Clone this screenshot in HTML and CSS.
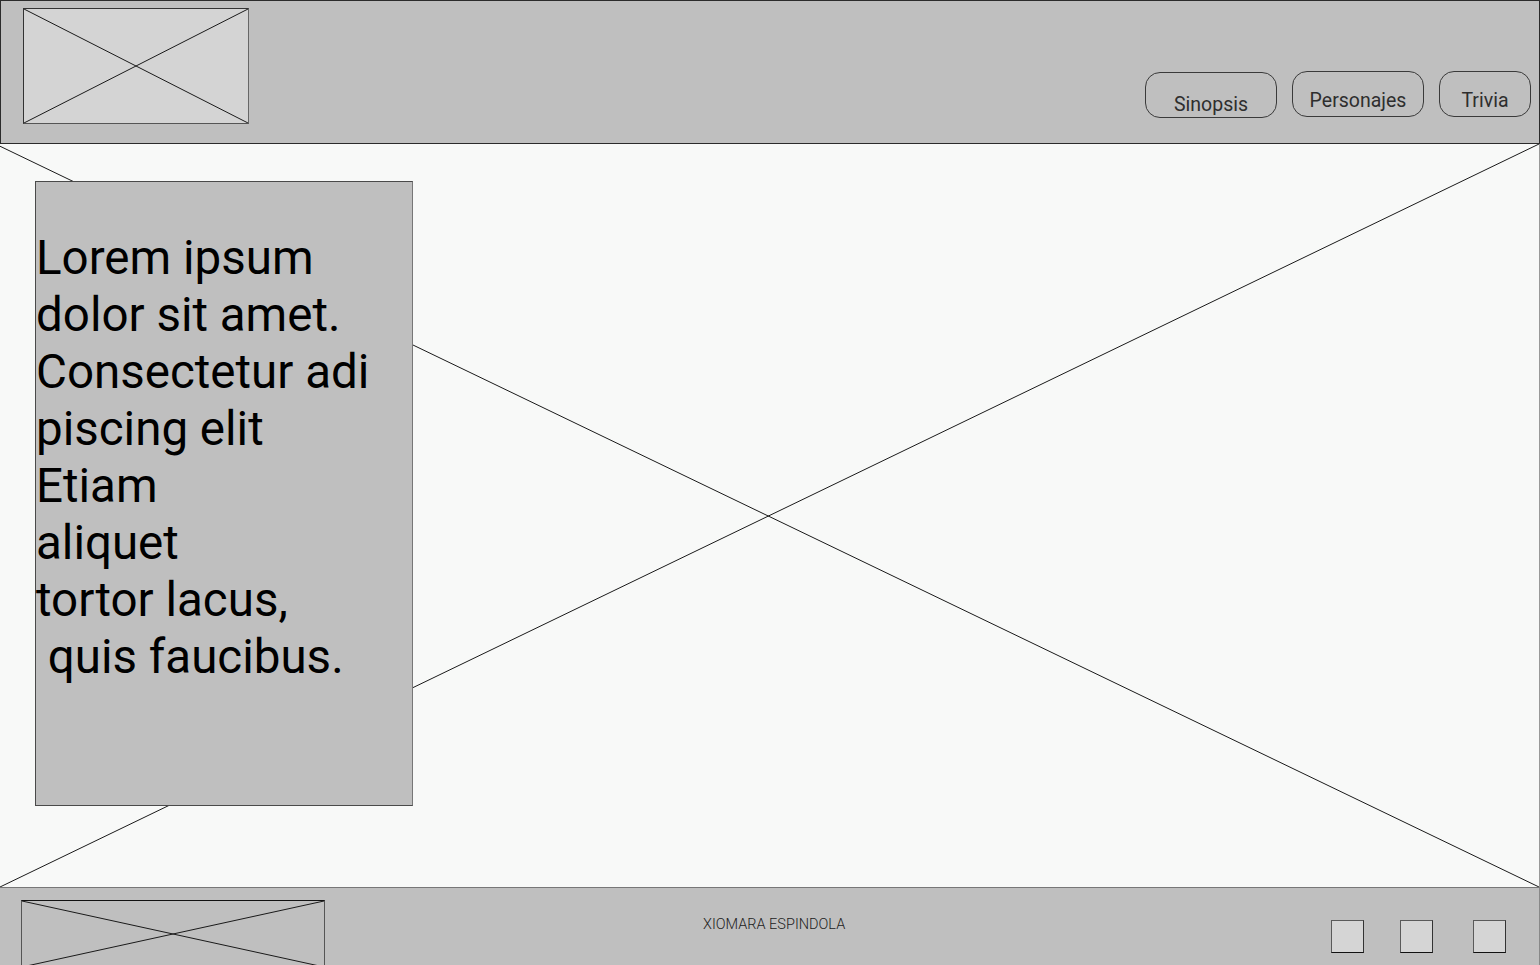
FILE: index.html
```html
<!DOCTYPE html>
<html>
	<head>
		<meta charset="utf-8">
		<title>Wireframe</title>
		<link rel="stylesheet" href="styles.css">
	</head>
	<body>
		<div class="page">
			<!-- cabecera -->
			<div class="header">
				<div class="logo">
					<svg class="cross" viewBox="0 0 100 100" preserveAspectRatio="none">
						<line x1="0" y1="0" x2="100" y2="100" vector-effect="non-scaling-stroke"/>
						<line x1="100" y1="0" x2="0" y2="100" vector-effect="non-scaling-stroke"/>
					</svg>
				</div>
				<div class="nav">
					<div class="navBtn btnLow">Sinopsis</div>
					<div class="navBtn">Personajes</div>
					<div class="navBtn btnSmall">Trivia</div>
				</div>
			</div>
			<!-- contenido -->
			<div class="hero">
				<svg class="cross" viewBox="0 0 100 100" preserveAspectRatio="none">
					<line x1="0" y1="0.3" x2="100" y2="100" vector-effect="non-scaling-stroke"/>
					<line x1="100" y1="0" x2="0" y2="100" vector-effect="non-scaling-stroke"/>
				</svg>
				<div class="textBox">
					<p>Lorem ipsum<br>dolor sit amet.<br>Consectetur adi<br>piscing elit<br>Etiam<br>aliquet<br>tortor lacus,<br>&nbsp;quis faucibus.</p>
				</div>
			</div>
			<!-- pie -->
			<div class="footer">
				<div class="footLogo">
					<svg class="cross" viewBox="0 0 100 100" preserveAspectRatio="none">
						<line x1="0" y1="0" x2="100" y2="100" vector-effect="non-scaling-stroke"/>
						<line x1="100" y1="0" x2="0" y2="100" vector-effect="non-scaling-stroke"/>
					</svg>
				</div>
				<div class="author">XIOMARA ESPINDOLA</div>
				<div class="social">
					<div class="sq"></div>
					<div class="sq sq2"></div>
					<div class="sq sq3"></div>
				</div>
			</div>
		</div>
	</body>
</html>
```

FILE: styles.css
```css
* {
	margin: 0;
	padding: 0;
	box-sizing: border-box;
}

body {
	background: #f8f9f8;
	font-family: Roboto, "Liberation Sans", sans-serif;
	overflow: hidden;
}

.page {
	width: 1540px;
	height: 965px;
	display: flex;
	flex-direction: column;
}

.cross {
	display: block;
	width: 100%;
	height: 100%;
}

.cross line {
	stroke: #1a1a1a;
	stroke-width: 1;
}

/* cabecera */
.header {
	height: 144px;
	background: #bfbfbf;
	border: 1px solid #2b2b2b;
	display: flex;
	justify-content: space-between;
	padding: 7px 8px 0 22px;
}

.header .logo {
	width: 226px;
	height: 116px;
	background: #d4d4d4;
	border: 1px solid #333;
	border-right-color: #666;
	border-bottom-color: #555;
}

.header .nav {
	display: flex;
	align-items: flex-start;
	gap: 15px;
	padding-top: 63px;
}

.header .navBtn {
	width: 132px;
	height: 46px;
	border: 1px solid #3a3a3a;
	border-radius: 15px;
	font-size: 19.5px;
	color: #2e2e2e;
	text-align: center;
	padding-top: 18px;
	line-height: 22px;
}

.header .btnLow {
	margin-top: 1px;
	padding-top: 21px;
}

.header .btnSmall {
	width: 92px;
}

/* contenido */
.hero {
	height: 743px;
	position: relative;
	border-right: 1px solid #999;
}

.hero .textBox {
	position: absolute;
	left: 35px;
	top: 37px;
	width: 378px;
	height: 625px;
	background: #bfbfbf;
	border: 1px solid #4a4a4a;
	border-right-color: #777;
	padding: 48px 0 0 0;
}

.hero .textBox p {
	font-size: 47.5px;
	line-height: 57px;
	color: #000;
	white-space: nowrap;
}

/* pie */
.footer {
	height: 78px;
	background: #bfbfbf;
	border-top: 1px solid #777;
	border-right: 1px solid #888;
	display: flex;
	align-items: flex-start;
	padding: 12px 0 0 21px;
	overflow: hidden;
}

.footer .footLogo {
	width: 304px;
	height: 67px;
	flex-shrink: 0;
	border: 1px solid #555;
	border-top-color: #111;
	border-bottom: none;
}

.footer .author {
	width: 560px;
	flex-shrink: 0;
	padding-left: 378px;
	padding-top: 16px;
	font-size: 14.5px;
	font-weight: 300;
	color: #222;
	white-space: nowrap;
}

.footer .social {
	display: flex;
	padding-top: 20px;
	padding-left: 446px;
}

.footer .sq {
	width: 33px;
	height: 33px;
	background: #d5d5d5;
	border: 1px solid #5a5a5a;
	border-bottom-color: #111;
	border-right-color: #333;
}

.footer .sq2 {
	margin-left: 36px;
}

.footer .sq3 {
	margin-left: 40px;
}
```
